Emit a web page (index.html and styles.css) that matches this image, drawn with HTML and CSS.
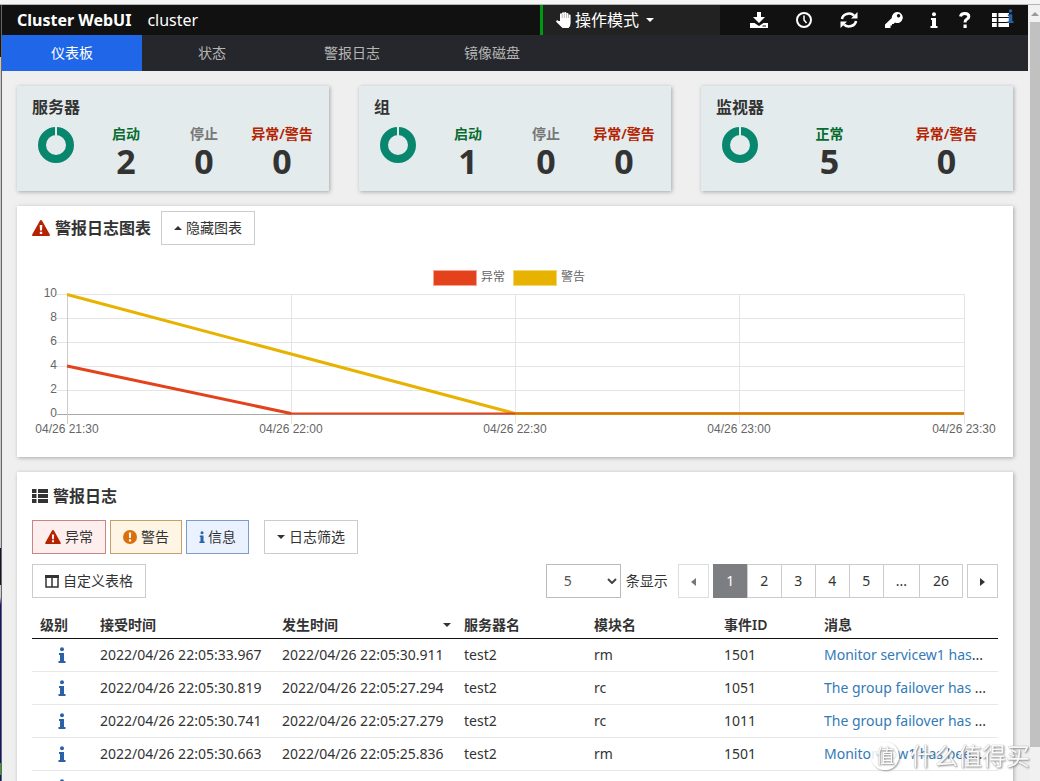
FILE: index.html
```
<!DOCTYPE html>
<html lang="zh-CN">
<head>
<meta charset="utf-8">
<title>Cluster WebUI</title>
<link rel="stylesheet" href="styles.css">
</head>
<body>
<svg class="defs" aria-hidden="true">
  <symbol id="i-info" viewBox="0 0 8 16"><circle cx="4" cy="2.2" r="2"/><path d="M1 6h5v8h1.500v2H.5v-2H2V8H1z"/></symbol>
  <symbol id="i-warn" viewBox="0 0 18 16"><path fill-rule="evenodd" d="M9 0q.7 0 1.100.7l7.700 13.800Q18.400 16 17 16H1Q-.4 16 .2 14.500L7.900.7Q8.300 0 9 0zM7.700 5l.3 5.500h2l.3-5.500zM7.800 11.700v2.200h2.400v-2.200z"/></symbol>
  <symbol id="i-list" viewBox="0 0 16 14"><path d="M0 0h4.500v4H0zM6 0h10v4H6zM0 5h4.500v4H0zM6 5h10v4H6zM0 10h4.500v4H0zM6 10h10v4H6z"/></symbol>
  <symbol id="i-down" viewBox="0 0 8 4"><path d="M0 0h8L4 4z"/></symbol>
  <symbol id="i-up" viewBox="0 0 8 4"><path d="M0 4h8L4 0z"/></symbol>
  <symbol id="i-left" viewBox="0 0 5 8"><path d="M5 0v8L0 4z"/></symbol>
  <symbol id="i-right" viewBox="0 0 5 8"><path d="M0 0v8l5-4z"/></symbol>
  <symbol id="i-donut" viewBox="0 0 36 36"><circle cx="18" cy="18" r="14" fill="none" stroke="#08876e" stroke-width="8"/><path d="M17 0h2v10h-2z" fill="#e3ebec"/></symbol>
</svg>
<div class="window">
  <div class="desktop-edge"></div>
  <div class="app">
    <header class="topbar">
      <strong class="brand">Cluster WebUI</strong>
      <span class="cluster-name">cluster</span>
      <button class="mode"><svg width="16" height="16" viewBox="0 0 16 16"><path d="M4 9V2.300a1 1 0 0 1 2 0V1.300a1 1 0 0 1 2.200 0v-.2a1 1 0 0 1 2.200 0v1a1 1 0 0 1 2.100 0v1.400a1 1 0 0 1 2.100.3V11q0 3-2 5H6.500L.4 10q-.8-1 .3-1.600 1-.4 1.900.6z"/><path d="M6.200 2v4M8.300 1.500V6M10.500 2v4M12.500 3v3" stroke="#222" stroke-width=".3"/></svg><span>操作模式</span><svg class="caret" width="8" height="4"><use href="#i-down"/></svg></button>
      <div class="tools">
        <button aria-label="下载"><svg width="18" height="16" viewBox="0 0 18 16"><path d="M7 0h4v5h4L9 11 3 5h4zM0 11h4.500L9 14l4.500-3H18v5H0z"/><path d="M12.500 14h3.500" stroke="#111"/></svg></button>
        <button aria-label="时间"><svg width="18" height="16" viewBox="0 0 18 16"><circle cx="9" cy="8" r="7" fill="none" stroke="#fff" stroke-width="2"/><path d="M9 3.500V8l2.500 3" fill="none" stroke="#fff" stroke-width="1.500"/></svg></button>
        <button aria-label="刷新"><svg width="18" height="16" viewBox="0 0 18 16"><path d="M2 7a7 6 0 0 1 12-3.500M16 9a7 6 0 0 1-12 3.500" fill="none" stroke="#fff" stroke-width="2.500"/><path d="M17.500 0v6.500H11zM.5 16V9.500H7z"/></svg></button>
        <button aria-label="密钥"><svg width="18" height="16" viewBox="0 0 18 16"><path fill-rule="evenodd" d="M12 0a5.500 5.500 0 1 1-2 10.500L8.500 12H7v1.500H5.500V16H0v-3.500L6.800 6A5.500 5.500 0 0 1 12 0zm1.500 2a1.700 1.700 0 1 0 .1 0z"/></svg></button>
        <button aria-label="信息"><svg width="8" height="16"><use href="#i-info"/></svg></button>
        <button class="help" aria-label="帮助"><svg width="12" height="16" viewBox="0 0 12 16"><path d="M1.500 4.500Q2 1.500 5.800 1.500q4 0 4 3 0 1.700-2 2.700Q6 8.200 6 10.500" fill="none" stroke="#fff" stroke-width="3"/><path d="M4.500 12.500h3.200V16H4.500z"/></svg></button>
        <button class="notice" aria-label="消息列表"><svg width="17" height="14" viewBox="0 0 16 14" preserveAspectRatio="none"><use href="#i-list"/></svg><svg class="badge" width="7" height="14"><use href="#i-info"/></svg></button>
      </div>
    </header>
    <nav class="tabs">
      <a class="active" href="#">仪表板</a><a href="#">状态</a><a href="#">警报日志</a><a href="#">镜像磁盘</a>
    </nav>
    <main>
      <section class="stats">
        <article class="stat"><h2>服务器</h2><div class="metrics"><svg class="donut" width="36" height="36"><use href="#i-donut"/></svg>
          <div class="metric good"><span>启动</span><b>2</b></div><div class="metric"><span>停止</span><b>0</b></div><div class="metric bad"><span>异常/警告</span><b>0</b></div></div></article>
        <article class="stat"><h2>组</h2><div class="metrics"><svg class="donut" width="36" height="36"><use href="#i-donut"/></svg>
          <div class="metric good"><span>启动</span><b>1</b></div><div class="metric"><span>停止</span><b>0</b></div><div class="metric bad"><span>异常/警告</span><b>0</b></div></div></article>
        <article class="stat"><h2>监视器</h2><div class="metrics"><svg class="donut" width="36" height="36"><use href="#i-donut"/></svg>
          <div class="metric good"><span>正常</span><b>5</b></div><div class="metric bad"><span>异常/警告</span><b>0</b></div></div></article>
      </section>
      <section class="card chart-card">
        <div class="card-head">
          <h2><svg class="red" width="18" height="16"><use href="#i-warn"/></svg>警报日志图表</h2>
          <button class="btn"><svg width="8" height="4"><use href="#i-up"/></svg>隐藏图表</button>
        </div>
        <svg class="chart" viewBox="0 0 966 192" role="img" aria-label="警报日志图表">
          <g stroke="#f5a393"><rect x="401.500" y="15.500" width="43" height="15" fill="#e3421c"/></g>
          <g stroke="#f0d674"><rect x="481.500" y="15.500" width="43" height="15" fill="#e7b300"/></g>
          <text x="449" y="26">异常</text><text x="529" y="26">警告</text>
          <path class="grid" d="M25 39.500h907M25 63.500h907M25 87.500h907M25 111.500h907M25 135.500h907M259.500 39v130M483.500 39v130M707.500 39v130M932.500 39v130"/>
          <path class="axis" d="M25 159.500h907"/><path class="yaxis" d="M35.500 39v130"/>
          <g class="series"><path stroke="#e7b300" d="M35 39.500 483 158.500H932"/><path stroke="#e3421c" d="M35 111 259 158.500"/><path stroke="#e3421c" stroke-width="2" d="M258 158.500H483"/><path stroke="#d0701a" stroke-width="2" d="M483 158.500H932"/></g>
          <g text-anchor="end"><text x="25" y="42">10</text><text x="25" y="66">8</text><text x="25" y="90">6</text><text x="25" y="114">4</text><text x="25" y="138">2</text><text x="25" y="162">0</text></g>
          <g text-anchor="middle"><text x="35" y="178">04/26 21:30</text><text x="259" y="178">04/26 22:00</text><text x="483" y="178">04/26 22:30</text><text x="707" y="178">04/26 23:00</text><text x="932" y="178">04/26 23:30</text></g>
        </svg>
      </section>
      <section class="card log-card">
        <h2><svg width="16" height="14"><use href="#i-list"/></svg>警报日志</h2>
        <div class="filters">
          <button class="btn danger"><svg class="red" width="16" height="14"><use href="#i-warn"/></svg>异常</button>
          <button class="btn warning"><svg width="14" height="14" viewBox="0 0 14 14"><circle cx="7" cy="7" r="7" fill="#d9700f"/><path d="M5.800 2.500h2.400L7.900 8H6.100zM5.900 9.200h2.200v2.200H5.900z" fill="#fff5e5"/></svg>警告</button>
          <button class="btn info"><svg class="blue" width="6" height="14"><use href="#i-info"/></svg>信息</button>
          <button class="btn filter"><svg width="8" height="4"><use href="#i-down"/></svg>日志筛选</button>
        </div>
        <div class="table-tools">
          <button class="btn"><svg width="14" height="13" viewBox="0 0 14 13"><path d="M1 1h12v11H1zM7 1v11" fill="none" stroke="#333" stroke-width="1.500"/><path d="M0 0h14v3H0z"/></svg>自定义表格</button>
          <div class="page-size"><div class="select-wrap"><select id="size"><option>5</option></select><svg width="10" height="6" viewBox="0 0 10 6"><path d="m1 1 4 4 4-4" fill="none" stroke="#444" stroke-width="2"/></svg></div><label for="size">条显示</label></div>
          <div class="pager">
            <button class="arrow off" aria-label="上一页"><svg width="5" height="8"><use href="#i-left"/></svg></button>
            <div class="pages"><button class="current">1</button><button>2</button><button>3</button><button>4</button><button>5</button><button>...</button><button>26</button></div>
            <button class="arrow" aria-label="下一页"><svg width="5" height="8"><use href="#i-right"/></svg></button>
          </div>
        </div>
        <table>
          <colgroup><col class="c-level"><col class="c-time"><col class="c-time"><col class="c-name"><col class="c-name"><col class="c-id"><col></colgroup>
          <thead><tr><th>级别</th><th>接受时间</th><th><div class="sorted">发生时间<svg width="8" height="4"><use href="#i-down"/></svg></div></th><th>服务器名</th><th>模块名</th><th>事件ID</th><th>消息</th></tr></thead>
          <tbody>
            <tr><td><svg class="blue" width="8" height="16"><use href="#i-info"/></svg></td><td>2022/04/26 22:05:33.967</td><td>2022/04/26 22:05:30.911</td><td>test2</td><td>rm</td><td>1501</td><td><a href="#">Monitor servicew1 has</a>...</td></tr>
            <tr><td><svg class="blue" width="8" height="16"><use href="#i-info"/></svg></td><td>2022/04/26 22:05:30.819</td><td>2022/04/26 22:05:27.294</td><td>test2</td><td>rc</td><td>1051</td><td><a href="#">The group failover has</a> ...</td></tr>
            <tr><td><svg class="blue" width="8" height="16"><use href="#i-info"/></svg></td><td>2022/04/26 22:05:30.741</td><td>2022/04/26 22:05:27.279</td><td>test2</td><td>rc</td><td>1011</td><td><a href="#">The group failover has</a> ...</td></tr>
            <tr><td><svg class="blue" width="8" height="16"><use href="#i-info"/></svg></td><td>2022/04/26 22:05:30.663</td><td>2022/04/26 22:05:25.836</td><td>test2</td><td>rm</td><td>1501</td><td><a href="#">Monitor fipw1 has bee</a>...</td></tr>
            <tr><td><svg class="blue" width="8" height="16"><use href="#i-info"/></svg></td><td></td><td></td><td></td><td></td><td></td><td></td></tr>
          </tbody>
        </table>
      </section>
    </main>
  </div>
  <div class="scrollbar"><svg width="8" height="4"><use href="#i-up"/></svg><div class="thumb"></div></div>
</div>
<div class="watermark"><span class="seal">值</span><span>什么值得买</span></div>
</body>
</html>
```
FILE: styles.css
```
* { box-sizing: border-box; }
body { margin: 0; background: #efefef; color: #333; font: 14px/20px "Noto Sans", "Noto Sans CJK SC", sans-serif; overflow: hidden; }
.defs { position: absolute; width: 0; height: 0; }
svg { fill: currentColor; flex: none; }
button, select { font: inherit; color: inherit; cursor: pointer; }
h2 { margin: 0; font-size: 16px; line-height: 22px; font-weight: 600; }
a { color: #337ab7; text-decoration: none; }

.window { display: grid; grid-template-columns: 2px minmax(0, 1fr) 12px; height: 100vh; padding-top: 5px; background: linear-gradient(#f5f5f5 4px, #b5b5b5 4px, #b5b5b5 5px, #efefef 5px); }
.desktop-edge { border-right: 1px solid #666; background: linear-gradient(#15151c 52px, #c8c8c8 52px, #c8c8c8 543px, #14142a 543px, #14142a 580px, #ccc 580px, #ccc 592px, #101078 600px, #101078 758px, #3b9b2e 758px, #3b9b2e 770px, #101078 770px); }
.app { overflow: hidden; }

.topbar { display: flex; align-items: stretch; height: 30px; background: #111; color: #fff; font-size: 16px; line-height: 30px; }
.brand { padding-left: 15px; }
.cluster-name { padding-left: 16px; flex: 1; }
.mode { display: flex; align-items: center; gap: 3px; width: 180px; padding: 0 0 0 13px; border: 0; border-left: 3px solid #009a12; background: #222; color: #fff; line-height: 30px; }
.mode .caret { margin-left: 4px; }
.tools { display: flex; align-items: center; width: 308px; padding-left: 30px; gap: 27px; }
.tools button { display: flex; padding: 0; border: 0; background: none; color: #fff; }
.tools .help { margin-left: -6px; }
.tools .notice { position: relative; margin-left: -6px; }
.tools .badge { position: absolute; right: -5px; top: -4px; color: #2a62a8; }

.tabs { display: flex; height: 36px; background: #26272c; }
.tabs a { width: 140px; color: #b5b5b5; line-height: 36px; text-align: center; }
.tabs a.active { background: #1f66e8; color: #fff; }

main { display: flex; flex-direction: column; gap: 15px; padding: 15px; }
.stats { display: grid; grid-template-columns: repeat(3, 1fr); gap: 30px; }
.stat, .card { background: #fff; box-shadow: 1px 1px 4px rgba(0, 0, 0, .3); }
.stat { height: 105px; padding: 10px 8px 0; background: #e3ebec; }
.stat h2 { padding-left: 7px; }
.metrics { display: flex; }
.donut { margin: 9px 13px 0; }
.metric { flex: 1; display: flex; flex-direction: column; padding-top: 6px; text-align: center; color: #777; font-weight: 600; white-space: nowrap; }
.metric b { color: #333; font-size: 34px; line-height: 34px; font-weight: 700; }
.metric.good { color: #086b30; }
.metric.bad { color: #b42200; }

.card { padding: 0 15px; }
.card h2 { display: flex; align-items: center; gap: 5px; }
.card-head { display: flex; align-items: center; gap: 10px; padding-top: 5px; }
.chart-card { padding-bottom: 10px; }
.red { color: #b42200; }
.blue { color: #2b61a6; }
.btn { display: flex; align-items: center; justify-content: center; gap: 4px; height: 34px; padding: 0 12px; border: 1px solid #ccc; background: #fff; white-space: nowrap; }
.chart { display: block; width: 100%; margin-top: 10px; font: 12px "Liberation Sans", "Noto Sans CJK SC", sans-serif; fill: #666; }
.grid, .axis, .yaxis, .series { fill: none; }
.grid { stroke: #e5e5e5; }
.axis { stroke: #a8a8a8; }
.yaxis { stroke: #ccc; }
.series { stroke-width: 3; }

.log-card { padding-top: 13px; min-height: 350px; }
.filters { display: flex; gap: 4px; margin-top: 13px; }
.danger { background: #ffeeee; border-color: #c78585; }
.warning { background: #fff5e5; border-color: #c79f6b; }
.info { gap: 3px; background: #ebf2ff; border-color: #7e9cc9; }
.filter { margin-left: 11px; }
.table-tools { display: flex; margin-top: 10px; }
.page-size { display: flex; align-items: center; gap: 5px; margin-left: auto; }
.select-wrap { position: relative; }
.select-wrap select { appearance: none; display: block; width: 75px; height: 34px; padding: 0 17px; border: 1px solid #bbb; border-radius: 0; background: #fff; color: #555; }
.select-wrap svg { position: absolute; right: 4px; top: 14px; pointer-events: none; }
.pager { display: flex; gap: 4px; margin-left: 10px; }
.pager button { height: 34px; padding: 0 12px; border: 1px solid #ccc; background: #fff; }
.pages { display: flex; }
.pages button { min-width: 35px; }
.pages button:last-child { min-width: 44px; }
.pages button + button { margin-left: -1px; }
.pages .current { background: #7d7e82; border-color: #7d7e82; color: #fff; }
.pager .off { color: #777; border-color: #ddd; }

table { width: 100%; margin-top: 14px; border-collapse: collapse; table-layout: fixed; }
.c-level { width: 60px; }
.c-time { width: 182px; }
.c-name { width: 130px; }
.c-id { width: 100px; }
th { height: 26px; padding: 0 8px; border-bottom: 1px solid #111; text-align: left; font-weight: 600; }
td { height: 33px; padding: 0 8px; border-bottom: 1px solid #e8e8e8; white-space: nowrap; }
td:first-child { text-align: center; }
td svg { display: block; margin: 0 auto; }
.sorted { display: flex; justify-content: space-between; align-items: center; margin-right: -3px; }

.scrollbar { display: flex; flex-direction: column; align-items: center; margin-left: 2px; background: #f1f1f1; color: #999; }
.scrollbar svg { margin: 7px 0 6px; }
.thumb { width: 100%; height: 95%; max-height: 725px; background: #c1c1c1; }

.watermark { position: fixed; right: 10px; bottom: 8px; display: flex; align-items: center; gap: 11px; font-size: 24px; line-height: 34px; color: rgba(255, 255, 255, .95); text-shadow: 1px 1px 2px #888, 0 0 1px #999; pointer-events: none; }
.seal { width: 28px; height: 28px; border-radius: 50%; background: rgba(255, 255, 255, .85); box-shadow: 1px 1px 2px #999; font-size: 19px; line-height: 28px; text-align: center; }
```
